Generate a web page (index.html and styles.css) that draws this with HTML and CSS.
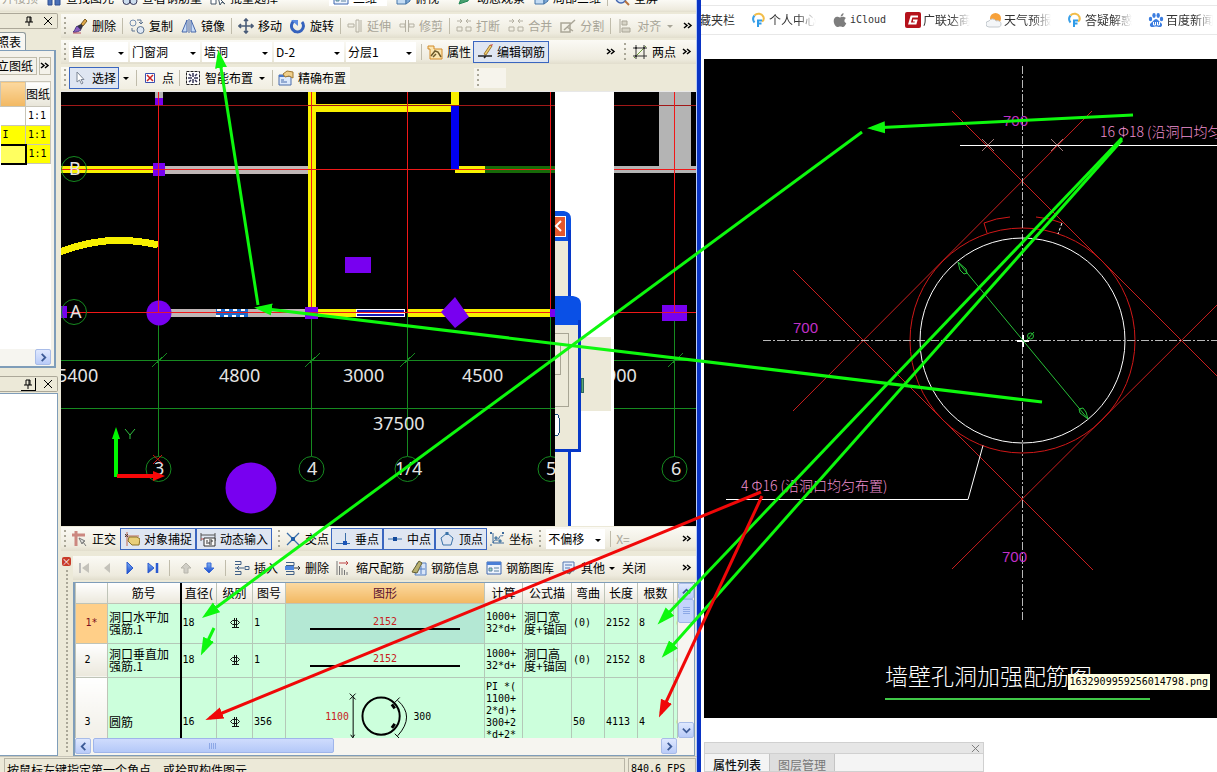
FILE: index.html
```html
<!DOCTYPE html>
<html lang="zh-CN">
<head>
<meta charset="utf-8">
<title>墙洞 - 编辑钢筋</title>
<link rel="stylesheet" href="styles.css">
</head>
<body>
<svg class="defs" aria-hidden="true">
  <defs>
    <linearGradient id="gb" x1="0" y1="0" x2="0" y2="1"><stop offset="0" stop-color="#7fb2f5"/><stop offset="1" stop-color="#1746c8"/></linearGradient>
    <symbol id="i-brush" viewBox="0 0 16 16"><path d="M9 6l4-5 2 2-4 5z" fill="#e0a84a" stroke="#7a5a20"/><path d="M5 8l4-2 2 2-2 4z" fill="#334"/><path d="M1 14c2-1 2-4 4-6l4 4c-2 1-5 3-8 2z" fill="#8b5fc0" stroke="#4a3a80"/><path d="M1 15h8" stroke="#b84a5a"/></symbol>
    <symbol id="i-copy" viewBox="0 0 16 16"><circle cx="4" cy="5" r="3" fill="none" stroke="#7890b0"/><circle cx="11.500" cy="12" r="3.500" fill="#dfe8f4" stroke="#5d7390"/><path d="M8 2h4v4M12 6l-2-2M12 6l2-2M3 10v3h3" fill="none" stroke="#5d7390"/></symbol>
    <symbol id="i-mirror" viewBox="0 0 16 16"><path d="M6 2v12H1zM10 2v12h5z" fill="#c8dcf8" stroke="#4666a8"/><path d="M8 1v14" stroke="#4666a8"/></symbol>
    <symbol id="i-move" viewBox="0 0 16 16"><path d="M8 1v14M1 8h14M6 3l2-2 2 2M6 13l2 2 2-2M3 6L1 8l2 2M13 6l2 2-2 2" fill="none" stroke="#4a5c78" stroke-width="1.600"/></symbol>
    <symbol id="i-rotate" viewBox="0 0 16 16"><path d="M4 3a6 6 0 1 0 8 1" fill="none" stroke="#3562bd" stroke-width="3"/><path d="M1 2h7v6z" fill="#5b8be0"/></symbol>
    <symbol id="i-extend" viewBox="0 0 16 16"><path d="M1 6h6v3H1zM9 2h3v12H9zM14 2v12" fill="none" stroke="#b4b0a2"/></symbol>
    <symbol id="i-trim" viewBox="0 0 16 16"><path d="M1 6h5v3H1zM10 6h5v3h-5zM6.500 2v12M9.500 2v12" fill="none" stroke="#b4b0a2"/></symbol>
    <symbol id="i-break" viewBox="0 0 16 16"><path d="M1 3h5M10 3h5M4 1l2 2-2 2M12 1l-2 2 2 2M1 9h5v4H1zM10 9h5v4h-5z" fill="none" stroke="#b4b0a2"/></symbol>
    <symbol id="i-split" viewBox="0 0 16 16"><path d="M1 5h9v9H1zM4 12L15 2M7 9l6 4" fill="none" stroke="#aaa698" stroke-width="1.500"/></symbol>
    <symbol id="i-align" viewBox="0 0 16 16"><path d="M3 1v14M5 3h5v4H5zM5 10h8v4H5z" fill="#d8d5c8" stroke="#aaa698"/></symbol>
    <symbol id="i-prop" viewBox="0 0 16 16"><path d="M1 2h6v3h8v10H3V5H1z" fill="#fbe6b0" stroke="#d28a28"/><path d="M4 12l4-5 3 1 3 5M6 13l3-3" fill="none" stroke="#6c5a2a" stroke-width="1.500"/></symbol>
    <symbol id="i-editbar" viewBox="0 0 16 16"><path d="M7 10L13 1l2 1-6 9z" fill="#f0d070" stroke="#a07830"/><path d="M13 1l2 1 1-2z" fill="#d04040"/><path d="M1 12h8l-2 2M1 12h14" fill="none" stroke="#222" stroke-width="1.500"/></symbol>
    <symbol id="i-twopt" viewBox="0 0 16 16"><path d="M4 1v14M12 1v14M1 4h14M1 12h14" stroke="#333"/><path d="M2 14L14 2" stroke="#6d9c3a"/><path d="M3 3h2v2H3zM11 3h2v2h-2zM3 11h2v2H3z" fill="#333"/></symbol>
    <symbol id="i-arrow" viewBox="0 0 16 16"><path d="M5 2v10l2.500-2 2 4 1.500-1-2-3.500h3z" fill="#fff" stroke="#7d8797"/></symbol>
    <symbol id="i-point" viewBox="0 0 16 16"><path d="M3.500 3.500h9v9h-9z" fill="#fff" stroke="#3a4fb0"/><path d="M5 5l6 6M11 5l-6 6" stroke="#c22" stroke-width="1.500"/></symbol>
    <symbol id="i-smart" viewBox="0 0 16 16"><path d="M1.500 1.500h13v13h-13z" fill="#fff" stroke="#222" stroke-dasharray="3 1"/><path d="M8 3v4M8 9v4M3 8h4M9 8h4M4 4l2 2M12 4l-2 2M4 12l2-2M12 12l-2-2" stroke="#335" stroke-width="1.500"/></symbol>
    <symbol id="i-exact" viewBox="0 0 16 16"><path d="M1 5h12v10H1z" fill="#dce9fb" stroke="#4a6cab"/><path d="M1 6h12" stroke="#4a78c8" stroke-width="2"/><path d="M3 10h3M3 12h6" stroke="#4a6cab"/><path d="M5 4l4-3 6 1v6l-4-2-4 1z" fill="#f0cf8a" stroke="#a07830"/></symbol>
    <symbol id="i-ortho" viewBox="0 0 16 16"><path d="M0 4h13M4 0v15" stroke="#cc8880" stroke-width="3"/><path d="M7 7l3 6 1-2 3 4M7 7l6 3-2 1" fill="#ddd" stroke="#777"/></symbol>
    <symbol id="i-snap" viewBox="0 0 16 16"><path d="M3 1v14M1 5h14" stroke="#c06a50"/><path d="M5 6h8l3 2-1 6H8L4 10z" fill="#e8cf7a" stroke="#8c7328"/><path d="M1 6l3-3M1 3l3 3" stroke="#444"/></symbol>
    <symbol id="i-dyn" viewBox="0 0 16 16"><path d="M1 2v8M15 2v8M1 4h14" fill="none" stroke="#555"/><path d="M1 8h3" stroke="#c55"/><path d="M4 7h11v8H4z" fill="#f8f8f8" stroke="#333"/><path d="M7 9v4M9 9h3v2H9v2h3" fill="none" stroke="#333"/></symbol>
    <symbol id="i-cross" viewBox="0 0 16 16"><path d="M2 2l12 12M14 2L2 14" stroke="#3a6ea8" stroke-width="1.300"/><path d="M6 6h4v4H6z" fill="#1f5fa8"/></symbol>
    <symbol id="i-perp" viewBox="0 0 16 16"><path d="M10.500 2v10M1 12.500h14" stroke="#3a6ea8"/><path d="M8 10h4v4H8z" fill="#1c55b8"/></symbol>
    <symbol id="i-mid" viewBox="0 0 16 16"><path d="M1 8h14" stroke="#3a6ea8"/><path d="M6 6h4v4H6z" fill="#134a9c"/></symbol>
    <symbol id="i-vert" viewBox="0 0 16 16"><path d="M8 2l6 5-2 7H4L2 7z" fill="none" stroke="#3a72a8"/><path d="M6.500 1h3v3h-3z" fill="#3a72a8"/></symbol>
    <symbol id="i-coord" viewBox="0 0 16 16"><path d="M4 2v10h11M4 12c2-6 4 0 6-5s3 0 4-3" fill="none" stroke="#3c6a9c"/><path d="M1 1l2 2M3 1L1 3M13 1l2 2M15 1l-2 2M1 14h2M6 6h2v2H6zM10 9h2v2h-2z" stroke="#3c6a9c" fill="#8cc"/></symbol>
    <symbol id="i-first" viewBox="0 0 16 16"><path d="M4 3v10" stroke="#bbb" stroke-width="2"/><path d="M13 3v10L6 8z" fill="#c4c2ba"/></symbol>
    <symbol id="i-prev" viewBox="0 0 16 16"><path d="M11 3v10L5 8z" fill="#c4c2ba"/></symbol>
    <symbol id="i-next" viewBox="0 0 16 16"><path d="M5 2v12l6-6z" fill="url(#gb)" stroke="#2a5ad0"/></symbol>
    <symbol id="i-last" viewBox="0 0 16 16"><path d="M3 3v10l6-5z" fill="url(#gb)" stroke="#2a5ad0"/><path d="M12 3v10" stroke="#2a5ad0" stroke-width="2.500"/></symbol>
    <symbol id="i-up" viewBox="0 0 16 16"><path d="M8 3l5 5h-3v5H6V8H3z" fill="#d0cec6" stroke="#b8b6ac"/></symbol>
    <symbol id="i-down" viewBox="0 0 16 16"><path d="M8 13l5-5h-3V3H6v5H3z" fill="url(#gb)" stroke="#3a6ad8"/></symbol>
    <symbol id="i-insert" viewBox="0 0 16 16"><path d="M1 1.500h6v3H1M1 11.500h6v3H1M1 8h9M5 6L3 8l2 2M11 6.500h4v3h-4z" fill="none" stroke="#3f5f86"/></symbol>
    <symbol id="i-remove" viewBox="0 0 16 16"><path d="M1 2.500h8v3H1M1 11.500h8v3H1" fill="none" stroke="#3f5f86"/><path d="M0 6h9v4H0z" fill="#4d86e0"/><path d="M9 8h6M13 6l2 2-2 2" fill="none" stroke="#333"/></symbol>
    <symbol id="i-scale" viewBox="0 0 16 16"><path d="M1 1v14M3.500 6v9M6 8v7M8.500 10v5M11 12v3" stroke="#777"/><path d="M3 3h9M10 1l2 2-2 2" stroke="#b44" fill="none"/></symbol>
    <symbol id="i-info" viewBox="0 0 16 16"><path d="M6 3h9v12H4z" fill="#d8e5f8" stroke="#567fc0"/><path d="M1 12L8 1l3 2-5 10z" fill="#b8b070" stroke="#655f30"/><path d="M8 9h6M10 6v8" stroke="#567fc0"/></symbol>
    <symbol id="i-lib" viewBox="0 0 16 16"><path d="M1 2h14v12H1z" fill="#eef4fd" stroke="#3f66ae"/><path d="M1 3.500h14" stroke="#4a7fd6" stroke-width="3"/><path d="M3 8h3v3H3zM8 8h5M8 11h5" stroke="#5a80a0" fill="#9db"/></symbol>
    <symbol id="i-other" viewBox="0 0 16 16"><path d="M2 2h11v9H2zM4 5h7M4 8h5" fill="#e4eefc" stroke="#5577b0"/><path d="M8 14l6-7M6 13h3" stroke="#666" stroke-width="1.500"/></symbol>
    <symbol id="i-find" viewBox="0 0 16 16"><path d="M2 3h4v12H2zM9 3h5v12H9z" fill="#4a70b8" stroke="#2f4f90"/><path d="M6 6h3" stroke="#2f4f90"/></symbol>
    <symbol id="i-glass" viewBox="0 0 16 16"><circle cx="4.500" cy="11" r="3.500" fill="#cde" stroke="#335"/><circle cx="11.500" cy="11" r="3.500" fill="#cde" stroke="#335"/></symbol>
    <symbol id="i-batch" viewBox="0 0 16 16"><path d="M1 3h5v4H1zM8 3h6v4H8zM1 9h5v5H1z" fill="#fff" stroke="#456"/><path d="M8 7l2 8 2-3 3 2z" fill="#fff" stroke="#456"/></symbol>
    <symbol id="i-cube" viewBox="0 0 16 16"><path d="M2 4h9v10H2z" fill="#c4dcf4" stroke="#4676a8"/><path d="M11 4l4-3v10l-4 3z" fill="#7ba6d4" stroke="#4676a8"/></symbol>
    <symbol id="i-orbit" viewBox="0 0 16 16"><path d="M2 14L5 6l9-4-3 9z" fill="#4aa070" stroke="#285"/></symbol>
    <symbol id="i-zoom" viewBox="0 0 16 16"><circle cx="7" cy="8" r="5" fill="#cfe2fa" stroke="#4466b0" stroke-width="1.500"/><path d="M11 11l4 4" stroke="#b8703a" stroke-width="2"/><path d="M5 8h4M7 6v4" stroke="#246"/></symbol>
    <symbol id="i-pin" viewBox="0 0 10 10"><path d="M3 1h4v5M3 1v5M1 6h8M5 6v4M6 1v5" stroke="#000" fill="none"/></symbol>
    <symbol id="i-x" viewBox="0 0 10 10"><path d="M1 1l8 8M9 1L1 9" stroke="#000"/></symbol>
    <symbol id="i-more" viewBox="0 0 10 10"><path d="M1 2l3 2.500L1 7M5 2l3 2.500L5 7" fill="none" stroke="#000" stroke-width="1.500"/></symbol>
    <symbol id="i-ans" viewBox="0 0 16 16"><path d="M3.500 10.500a5.500 5.500 0 0 1 0-7" fill="none" stroke="#3aa0e8" stroke-width="2"/><path d="M3.500 3.500a5.500 5.500 0 0 1 9 1.500c.7 2 0 3.500-1.500 4.500" fill="none" stroke="#f2bd48" stroke-width="2"/><path d="M11 8.500H7V15M7 11.500h3.500" fill="none" stroke="#2f9be8" stroke-width="2"/></symbol>
    <symbol id="i-apple" viewBox="0 0 16 16"><path d="M8.500 4.500C9 2.500 10 1.500 11.500 1c.2 2-1 3.500-3 3.500zM8 5.500c1-.2 2-.9 3.300-.7 1 .1 2 .6 2.500 1.400-2 1.300-1.700 4.200.5 5-.7 1.800-2 3.800-3.300 3.800-1 0-1.400-.6-2.700-.6S6.500 15 5.500 15C3.500 15 1.700 11.500 1.700 9s1.500-4.200 3.300-4.200c1.200 0 2 .7 3 .7z" fill="#7d7d7d"/></symbol>
    <symbol id="i-g" viewBox="0 0 16 16"><rect width="16" height="16" rx="2" fill="#b5121b"/><path d="M13 4.500H6.500L4.500 11.500h6l.8-3H8" fill="none" stroke="#fff" stroke-width="2.200"/></symbol>
    <symbol id="i-sun" viewBox="0 0 16 16"><circle cx="9.500" cy="6.500" r="5.500" fill="#f7a13a"/><path d="M3 15a3 3 0 0 1 0-6 4 4 0 0 1 7 0c3-1 5 1 5 3s-1 3-3 3z" fill="#f4f6f8" stroke="#c4c9ce"/></symbol>
    <symbol id="i-paw" viewBox="0 0 16 16"><g fill="#3b7de0"><ellipse cx="2.500" cy="7" rx="1.700" ry="2.200"/><ellipse cx="6" cy="3.500" rx="1.700" ry="2.400"/><ellipse cx="10.200" cy="3.500" rx="1.700" ry="2.400"/><ellipse cx="13.500" cy="7" rx="1.700" ry="2.200"/><path d="M8 7c2 0 3 2.500 5 4s1 4-1 4-2.500-.5-4-.5-2 .5-4 .5-3-2.500-1-4S6 7 8 7z"/></g><path d="M5.500 10v3h2v-3M9.500 10v3h2v-3" fill="none" stroke="#fff"/></symbol>
    <symbol id="i-grade" viewBox="0 0 12 12"><path d="M3.500 3.500h5l2 2-2 2h-5l-2-2zM5.500 1v9M7.500 1v9M3 10.500h7" fill="none" stroke="#111"/></symbol>
    <symbol id="i-chl" viewBox="0 0 10 10"><path d="M7 1L3 5l4 4" fill="none" stroke="#3c5a96" stroke-width="2"/></symbol>
    <symbol id="i-chr" viewBox="0 0 10 10"><path d="M3 1l4 4-4 4" fill="none" stroke="#3c5a96" stroke-width="2"/></symbol>
    <symbol id="i-chu" viewBox="0 0 10 10"><path d="M1 7l4-4 4 4" fill="none" stroke="#3c5a96" stroke-width="2"/></symbol>
    <symbol id="i-chd" viewBox="0 0 10 10"><path d="M1 3l4 4 4-4" fill="none" stroke="#3c5a96" stroke-width="2"/></symbol>
  </defs>
</svg>

<div class="desktop">
  <section class="app">
    <div class="bar topbar">
      <button class="tool off">并楼顶</button>
      <button class="tool"><svg class="ic"><use href="#i-find"/></svg>查找图元</button>
      <button class="tool"><svg class="ic"><use href="#i-glass"/></svg>查看钢筋量</button>
      <button class="tool"><svg class="ic"><use href="#i-batch"/></svg>批量选择</button>
      <button class="tool viewmode"><svg class="ic"><use href="#i-lib"/></svg>二维</button>
      <button class="tool"><svg class="ic"><use href="#i-cube"/></svg>俯视<i class="caret"></i></button>
      <button class="tool"><svg class="ic"><use href="#i-orbit"/></svg>动态观察</button>
      <button class="tool"><svg class="ic"><use href="#i-cube"/></svg>局部三维</button>
      <i class="sep"></i>
      <button class="tool"><svg class="ic"><use href="#i-zoom"/></svg>全屏</button>
    </div>

    <div class="body">
      <aside class="side">
        <div class="panel-head"><button class="mini" aria-label="固定"><svg><use href="#i-pin"/></svg></button><button class="mini" aria-label="关闭"><svg><use href="#i-x"/></svg></button></div>
        <div class="tabs"><button class="tab">照表</button></div>
        <div class="sheet-box">
          <div class="sheet-tools"><button class="flat">立图纸</button><button class="flat" aria-label="更多"><svg><use href="#i-more"/></svg></button></div>
          <div class="sheet-list">
            <table class="sheet">
              <thead><tr><th class="hot"></th><th>图纸</th></tr></thead>
              <tbody>
                <tr><td></td><td>1:1</td></tr>
                <tr class="yel"><td>I</td><td>1:1</td></tr>
                <tr class="yel"><td class="cur"></td><td>1:1</td></tr>
              </tbody>
            </table>
          </div>
          <div class="hscroll"><button class="sb" aria-label="右"><svg><use href="#i-chr"/></svg></button></div>
        </div>
        <div class="panel-head second"><button class="mini raised" aria-label="固定"><svg><use href="#i-pin"/></svg></button><button class="mini" aria-label="关闭"><svg><use href="#i-x"/></svg></button></div>
        <div class="blank"></div>
      </aside>

      <main class="main">
        <div class="bar">
          <i class="grip"></i>
          <button class="tool"><svg class="ic"><use href="#i-brush"/></svg>删除</button><i class="sep"></i>
          <button class="tool"><svg class="ic"><use href="#i-copy"/></svg>复制</button>
          <button class="tool"><svg class="ic"><use href="#i-mirror"/></svg>镜像</button><i class="sep"></i>
          <button class="tool"><svg class="ic"><use href="#i-move"/></svg>移动</button>
          <button class="tool"><svg class="ic"><use href="#i-rotate"/></svg>旋转</button><i class="sep"></i>
          <button class="tool off"><svg class="ic"><use href="#i-extend"/></svg>延伸</button>
          <button class="tool off"><svg class="ic"><use href="#i-trim"/></svg>修剪</button><i class="sep"></i>
          <button class="tool off"><svg class="ic"><use href="#i-break"/></svg>打断</button>
          <button class="tool off"><svg class="ic"><use href="#i-break"/></svg>合并</button>
          <button class="tool off"><svg class="ic"><use href="#i-split"/></svg>分割</button><i class="sep"></i>
          <button class="tool off"><svg class="ic"><use href="#i-align"/></svg>对齐<i class="caret"></i></button>
          <button class="more" aria-label="更多"><svg><use href="#i-more"/></svg></button>
        </div>
        <div class="bar tight">
          <i class="grip"></i>
          <span class="combo first"><select aria-label="楼层"><option>首层</option></select></span>
          <span class="combo"><select aria-label="构件类型"><option>门窗洞</option></select></span>
          <span class="combo"><select aria-label="构件"><option>墙洞</option></select></span>
          <span class="combo"><select aria-label="名称"><option>D-2</option></select></span>
          <span class="combo"><select aria-label="分层"><option>分层1</option></select></span>
          <i class="sep wide"></i>
          <button class="tool"><svg class="ic"><use href="#i-prop"/></svg>属性</button>
          <button class="tool on"><svg class="ic"><use href="#i-editbar"/></svg>编辑钢筋</button>
          <button class="more" aria-label="更多"><svg><use href="#i-more"/></svg></button>
          <div class="dock"><i class="grip"></i><button class="tool"><svg class="ic"><use href="#i-twopt"/></svg>两点</button><button class="more" aria-label="更多"><svg><use href="#i-more"/></svg></button></div>
        </div>
        <div class="bar tight third">
          <div class="strip">
            <i class="grip"></i>
            <button class="tool on"><svg class="ic"><use href="#i-arrow"/></svg>选择</button><i class="caret"></i>
            <i class="sep wide"></i>
            <button class="tool"><svg class="ic"><use href="#i-point"/></svg>点</button>
            <i class="sep wide"></i>
            <button class="tool"><svg class="ic"><use href="#i-smart"/></svg>智能布置<i class="caret"></i></button>
            <i class="sep wide"></i>
            <button class="tool"><svg class="ic"><use href="#i-exact"/></svg>精确布置</button>
          </div>
          <div class="stub"><i class="grip"></i></div>
        </div>

        <div class="plan">
          <svg viewBox="61 91 635 435" preserveAspectRatio="none" shape-rendering="crispEdges">
            <path fill="#000" d="M61 92h494v434H61zM614 92h82v434h-82z"/>
            <path fill="#b4b4b4" d="M155 92h8v6h-8zM659 92h32v74h-32zM614 166h82v7h-82z"/>
            <path fill="#bfb6b6" d="M165 166h143v8H165zM171 309h134v8H171z"/>
            <path fill="#f8f000" d="M308 92h8v217h-8zM312 104h143v8H312zM451 92h8v13h-8zM455 166h30v7h-30zM61 166h92v7H61zM318 309h38v8h-38zM407 309h143v8H407z"/>
            <path fill="#0000f0" d="M451 105h8v64h-8z"/><path fill="#176a08" d="M485 166h70v7h-70z"/>
            <path fill="none" stroke="#f8f000" stroke-width="7" d="M60 252Q108 233 158 245"/>
            <path fill="#fff" d="M356 309h49v8h-49z"/><path fill="#1818b8" d="M357 310h47v2h-47zM357 314h47v2h-47z"/>
            <path fill="#1c68c8" d="M216 309h32v8h-32z"/><path stroke="#fff" stroke-width="2" stroke-dasharray="4 4" d="M217 310h30M216 316h32"/>
            <path fill="#a01818" d="M61 105h494v1H61zM614 105h82v1h-82z"/>
            <path fill="#f01818" d="M61 169h494v1H61zM614 169h82v1h-82zM61 312h494v1H61zM614 312h82v1h-82zM158 92h1v221h-1zM311 92h1v221h-1zM407 92h1v221h-1zM550 92h1v221h-1zM674 92h1v221h-1z"/>
            <path fill="#168a20" d="M158 313h1v143h-1zM311 313h1v143h-1zM407 313h1v143h-1zM550 313h1v143h-1zM674 313h1v143h-1zM61 360h494v1H61zM614 360h82v1h-82zM61 408h494v1H61zM614 408h82v1h-82z"/>
            <path stroke="#168a20" fill="none" d="M152 367l15-14M305 367l15-14M400 367l15-14M544 367l11-10M668 367l15-14"/>
            <g fill="#7800f0" shape-rendering="auto"><path d="M155 98h8v7h-8zM153 163h12v13h-12zM61 306h6v12h-6zM305 307h13v12h-13zM345 257h26v16h-26zM455 297l14 20-14 11-14-16zM550 309h5v8h-5zM662 305h25v16h-25z"/><circle cx="159" cy="313" r="12.500"/><circle cx="251" cy="488" r="25.500"/></g>
            <path fill="#e01838" d="M158 301h1v12h-1zM158 98h1v7h-1zM158 163h1v13h-1zM146 312h26v1h-26zM305 312h13v1h-13zM153 169h12v1h-12zM662 312h25v1h-25zM674 305h1v8h-1z"/>
            <g fill="none" stroke="#168a20" shape-rendering="auto"><circle cx="74" cy="169" r="12.500"/><circle cx="74" cy="312" r="12.500"/><circle cx="158.500" cy="469" r="12.500"/><circle cx="311.500" cy="469" r="12.500"/><circle cx="407.500" cy="469" r="12.500"/><circle cx="550.500" cy="469" r="12.500"/><circle cx="674.500" cy="469" r="12.500"/></g>
            <g class="dim"><text x="69" y="175">B</text><text x="70" y="318">A</text><text x="57" y="382">5400</text><text x="219" y="382">4800</text><text x="343" y="382">3000</text><text x="462" y="382">4500</text><text x="373" y="430">37500</text><text x="154" y="475">3</text><text x="307" y="475">4</text><text x="395" y="475">1/4</text><text x="546" y="475">5</text><text x="606" y="382">900</text><text x="671" y="475">6</text></g>
            <path fill="#e8e8e8" d="M61 91h635v1H61z"/>
            <g shape-rendering="auto"><path fill="none" stroke="#00f800" stroke-width="4" d="M116 477v-40"/><path fill="#00f800" d="M112 439l4-12 4 12z"/><path stroke="#f80808" stroke-width="4" d="M117 476h38"/><path fill="#f80808" d="M153 471l12 5-12 5z"/><path stroke="#30c040" fill="none" d="M125 429l5 6 5-6M130 435v4"/><path stroke="#d01010" d="M153 455l10 9M162 455l-9 9"/></g>
            <path fill="#fff" d="M555 92h59v434h-59z"/>
            <path fill="#ece9d8" d="M555 230h14v296h-14zM581 337h30v74h-30z"/>
            <path fill="#0b50e0" d="M555 211h9q7 1 7 8v22h-16z" shape-rendering="auto"/><path fill="#0638c8" d="M568 230h3v296h-3z"/>
            <path fill="#fff" d="M555 216h10l1 1v19l-1 1h-10z"/><path fill="#e4572c" d="M555 217h10v19h-10z"/><path fill="none" stroke="#fff" stroke-width="2" d="M561 221l-5 5 5 5" shape-rendering="auto"/>
            <path fill="#ece9d8" d="M555 320h23v130h-23z"/><path fill="#0a50e6" d="M555 296h18q8 1 8 8v21h-26z" shape-rendering="auto"/><path fill="#0638c8" d="M578 320h3v132h-26v-3h23z"/>
            <path fill="none" stroke="#a8a594" d="M555 333.500h13.500v73H555M560.500 345v29.500H555"/><path fill="#fff" stroke="#184878" d="M555 414.500h2q2 0 2 3v15q0 3-2 3h-2"/><path fill="#5ba874" stroke="#31665e" d="M581 378h2v14h-2z"/>
          </svg>
        </div>

        <div class="bar tight snap">
          <i class="grip"></i>
          <button class="tool lead"><svg class="ic"><use href="#i-ortho"/></svg>正交</button>
          <div class="joined"><button class="tool on"><svg class="ic"><use href="#i-snap"/></svg>对象捕捉</button><button class="tool on"><svg class="ic"><use href="#i-dyn"/></svg>动态输入</button></div>
          <i class="grip apart"></i>
          <button class="tool"><svg class="ic"><use href="#i-cross"/></svg>交点</button>
          <div class="joined"><button class="tool on"><svg class="ic"><use href="#i-perp"/></svg>垂点</button><button class="tool on"><svg class="ic"><use href="#i-mid"/></svg>中点</button><button class="tool on"><svg class="ic"><use href="#i-vert"/></svg>顶点</button></div>
          <button class="tool"><svg class="ic"><use href="#i-coord"/></svg>坐标</button>
          <i class="grip apart"></i>
          <span class="combo first"><select aria-label="偏移"><option>不偏移</option></select></span>
          <i class="sep wide"></i><label class="off">X=</label>
          <button class="more" aria-label="更多"><svg><use href="#i-more"/></svg></button>
        </div>

        <div class="rebar">
          <div class="handle"><button class="close" aria-label="关闭">×</button><i class="dots"></i></div>
          <div class="rebar-body">
            <div class="bar nav">
              <button class="tool" aria-label="首条"><svg class="ic"><use href="#i-first"/></svg></button>
              <button class="tool" aria-label="上一条"><svg class="ic"><use href="#i-prev"/></svg></button>
              <button class="tool" aria-label="下一条"><svg class="ic"><use href="#i-next"/></svg></button>
              <button class="tool" aria-label="末条"><svg class="ic"><use href="#i-last"/></svg></button><i class="sep"></i>
              <button class="tool" aria-label="上移"><svg class="ic"><use href="#i-up"/></svg></button>
              <button class="tool" aria-label="下移"><svg class="ic"><use href="#i-down"/></svg></button><i class="sep"></i>
              <button class="tool"><svg class="ic"><use href="#i-insert"/></svg>插入</button>
              <button class="tool"><svg class="ic"><use href="#i-remove"/></svg>删除</button>
              <button class="tool"><svg class="ic"><use href="#i-scale"/></svg>缩尺配筋</button>
              <button class="tool"><svg class="ic"><use href="#i-info"/></svg>钢筋信息</button>
              <button class="tool"><svg class="ic"><use href="#i-lib"/></svg>钢筋图库</button>
              <button class="tool"><svg class="ic"><use href="#i-other"/></svg>其他<i class="caret"></i></button>
              <button class="tool">关闭</button>
              <button class="more" aria-label="更多"><svg><use href="#i-more"/></svg></button>
            </div>
            <div class="gridbox">
              <div class="gridrow">
                <div class="gridclip">
                  <table class="grid">
                    <colgroup><col class="c-idx"><col class="c-name"><col class="c-s"><col class="c-s"><col class="c-xs"><col><col class="c-calc"><col class="c-desc"><col class="c-xs"><col class="c-xs"><col class="c-s"><col class="c-end"></colgroup>
                    <thead><tr><th></th><th>筋号</th><th class="dia">直径(</th><th>级别</th><th>图号</th><th class="hot">图形</th><th>计算</th><th>公式描</th><th>弯曲</th><th>长度</th><th>根数</th><th></th></tr></thead>
                    <tbody>
                      <tr class="r1"><th class="cur">1*</th><td>洞口水平加强筋.1</td><td class="dia num">18</td><td class="mid"><svg class="grade"><use href="#i-grade"/></svg></td><td class="num">1</td><td class="shape sel"><span>2152</span></td><td class="num">1000+<br>32*d+</td><td>洞口宽度+锚固</td><td class="num">(0)</td><td class="num">2152</td><td class="num">8</td><td class="num">(</td></tr>
                      <tr class="r2"><th>2</th><td>洞口垂直加强筋.1</td><td class="dia num">18</td><td class="mid"><svg class="grade"><use href="#i-grade"/></svg></td><td class="num">1</td><td class="shape"><span>2152</span></td><td class="num">1000+<br>32*d+</td><td>洞口高度+锚固</td><td class="num">(0)</td><td class="num">2152</td><td class="num">8</td><td class="num">(</td></tr>
                      <tr class="r3"><th>3</th><td>圆筋</td><td class="dia num">16</td><td class="mid"><svg class="grade"><use href="#i-grade"/></svg></td><td class="num">356</td><td class="ring"><svg viewBox="0 0 200 80"><circle cx="96" cy="34" r="19" fill="none" stroke="#000" stroke-width="2"/><path d="M67.500 14v42M64 11l6 6M70 11l-6 6M65 53l2 3 2-3M113 18q18 16 0 36M110 20l5-5M110 52l5 5" fill="none" stroke="#000"/><path d="M107 22l3 4M107 46l3-4" stroke="#000" stroke-width="3"/><text x="39" y="38" fill="#c82020">1100</text><text x="129" y="38">300</text></svg></td><td class="num top">PI *(<br>1100+<br>2*d)+<br>300+2<br>*d+2*</td><td></td><td class="num">50</td><td class="num">4113</td><td class="num">4</td><td class="num">(</td></tr>
                    </tbody>
                  </table>
                </div>
                <div class="vscroll"><button class="sb" aria-label="上"><svg><use href="#i-chu"/></svg></button><i class="vthumb"></i><button class="sb down" aria-label="下"><svg><use href="#i-chd"/></svg></button></div>
              </div>
              <div class="hscroll wide"><button class="sb" aria-label="左"><svg><use href="#i-chl"/></svg></button><i class="hthumb"></i><button class="sb last" aria-label="右"><svg><use href="#i-chr"/></svg></button></div>
            </div>
          </div>
        </div>
      </main>
    </div>
    <footer class="status"><span class="msg">按鼠标左键指定第一个角点，或拾取构件图元</span><span class="fps">840.6 FPS</span></footer>
  </section>

  <section class="browser">
    <nav class="marks">
      <a href="#" class="cut">藏夹栏</a>
      <a href="#"><svg class="ic"><use href="#i-ans"/></svg><span>个人中心</span></a>
      <a href="#" class="plain"><svg class="ic"><use href="#i-apple"/></svg><span>iCloud</span></a>
      <a href="#"><svg class="ic"><use href="#i-g"/></svg><span>广联达商</span></a>
      <a href="#"><svg class="ic"><use href="#i-sun"/></svg><span>天气预报</span></a>
      <a href="#"><svg class="ic"><use href="#i-ans"/></svg><span>答疑解惑</span></a>
      <a href="#"><svg class="ic"><use href="#i-paw"/></svg><span>百度新闻</span></a>
    </nav>
    <figure class="cad">
      <svg viewBox="704 59 513 659" preserveAspectRatio="none">
        <g fill="none" stroke="#c81e1e"><path d="M952 111L1217 376"/><path d="M1092 111L793 411"/><path d="M793 270L1093 570"/><path d="M1217 305L952 569"/><circle cx="1022.500" cy="340.500" r="112.500" stroke="#d01818"/><path stroke="#d01818" d="M987 233l-3-10q12-5 26-6M1036 217q14 1 26 6"/></g>
        <g fill="none" stroke="#b8b8b8" stroke-dasharray="8 2 2 2"><path d="M1022.500 66v554M763 340.500h454"/></g>
        <circle cx="1022.500" cy="340.500" r="102.500" fill="none" stroke="#fff"/>
        <path d="M960 145.500h257M726 499.500h242l15-54" stroke="#fff" fill="none"/>
        <path d="M1017 341h12M1023 335v12" stroke="#fff" stroke-width="2"/>
        <path d="M1062 223l-4 11" stroke="#fff" stroke-dasharray="3 2"/>
        <path d="M982 151l12-12M1063 151l-12-12M982 139l12 12M1051 151l12-12" stroke="#e8b0b0" fill="none" stroke-width=".7"/>
        <g stroke="#28c038" fill="none"><path d="M958 262l130 157M958 262l2 8 4 4 3-1-1-4zM1088 419l-2-7-3-4-4 1 1 4z"/><ellipse cx="1030.500" cy="336" rx="3" ry="3"/><path d="M1027 340l7-8"/></g>
        <path fill="#40c848" d="M885 698h265v2H885z"/>
        <g class="mag"><text x="1003" y="126">700</text><text x="793" y="333">700</text><text x="1002" y="562">700</text></g>
        <text class="pink" x="1100" y="137">16 Φ18 (沿洞口均匀布置)</text>
        <text class="pink" x="741" y="491">4 Φ16 (沿洞口均匀布置)</text>
        <text class="ttl" x="885" y="685">墙壁孔洞加强配筋图</text>
      </svg>
      <span class="tip">1632909959256014798.png</span>
    </figure>
    <div class="props">
      <div class="props-head"><button aria-label="关闭"><svg><use href="#i-x"/></svg></button></div>
      <div class="props-tabs"><button class="sel">属性列表</button><button>图层管理</button></div>
    </div>
  </section>

  <svg class="links" viewBox="0 0 1217 772" preserveAspectRatio="none" aria-hidden="true">
    <defs>
      <marker id="mg" markerUnits="userSpaceOnUse" markerWidth="18" markerHeight="14" refX="13" refY="7" orient="auto"><path d="M0 1l18 6-18 6z" fill="#0df80d"/></marker>
      <marker id="mr" markerUnits="userSpaceOnUse" markerWidth="18" markerHeight="14" refX="13" refY="7" orient="auto"><path d="M0 1l18 6-18 6z" fill="#f00808"/></marker>
    </defs>
    <g stroke="#0df80d" stroke-width="3" marker-end="url(#mg)">
      <path d="M258 305L219 55"/><path d="M1042 402L259 308"/><path d="M1133 115L872 128"/><path d="M862 132L206 615"/><path d="M214 628L203 651"/><path d="M1122 138L661 621"/><path d="M1122 140L665 654"/>
    </g>
    <g stroke="#f00808" stroke-width="3" marker-end="url(#mr)"><path d="M761 492L210 718"/><path d="M762 496L661 713"/></g>
  </svg>
</div>
</body>
</html>
```
FILE: styles.css
```css
* { box-sizing: border-box; }
body { margin: 0; overflow: hidden; font: 12px/16px "Noto Sans CJK SC", sans-serif; color: #000; background: #fff; }
button, select { font: inherit; color: inherit; margin: 0; padding: 0; border: 0; background: none; border-radius: 0; }
button { display: flex; align-items: center; white-space: nowrap; }
i { font-style: normal; display: block; flex: none; }
.defs { position: absolute; width: 0; height: 0; }

.desktop { position: relative; display: grid; grid-template-columns: minmax(0, 701fr) minmax(0, 516fr); height: 100vh; overflow: hidden; }
.links { position: absolute; inset: 0; width: 100%; height: 100%; pointer-events: none; fill: none; }

/* application window */
.app { display: flex; flex-direction: column; min-height: 0; background: #ece9d8; border-right: 4px solid #0a34c4; box-shadow: inset -1px 0 #b8ccf8; }
.body { display: flex; flex: 1; min-height: 0; margin-right: 1px; }
.main { display: flex; flex-direction: column; flex: 1; min-width: 0; }

/* toolbars */
.bar { display: flex; align-items: center; gap: 8px; flex: none; height: 24px; margin: 1px 0; padding: 0 4px 0 3px; background: linear-gradient(#fbfaf5, #eeebde 80%, #e2decd); overflow: hidden; }
.bar.tight { gap: 2px; }
.tool { gap: 4px; flex: none; height: 22px; }
.tool.on { padding: 0 3px; border: 1px solid #3a66c0; background: #dfe6f2; }
.off { color: #a8a598; }
.ic { width: 16px; height: 16px; flex: none; }
.sep { width: 1px; height: 16px; margin: 0 -2px; background: #c0bcab; }
.sep.wide { margin: 0 3px; }
.grip { width: 3px; height: 18px; margin-right: -3px; background: radial-gradient(circle at 1px 1px, #aaa798 1px, transparent 1px) 0 0 / 3px 5px; }
.tight .grip { margin-right: 0; }
.tight .grip.apart { margin: 0 2px 0 4px; }
.lead { margin: 0 2px 0 3px; }
.caret { width: 0; height: 0; margin: 0 2px; border: 3px solid transparent; border-top-color: currentColor; border-bottom: 0; }
.more { margin-left: auto; }
.more svg { width: 10px; height: 16px; }
.combo { position: relative; display: flex; width: 70px; height: 20px; background: #fff; }
.combo.first { width: 59px; }
.combo select { appearance: none; flex: 1; min-width: 0; padding: 0 2px; }
.combo::after { content: ""; position: absolute; right: 4px; top: 10px; border: 3px solid transparent; border-top-color: #000; border-bottom: 0; pointer-events: none; }
.dock { display: flex; align-items: center; gap: 5px; width: 74px; height: 24px; padding-left: 6px; }
.bar.third { background: none; padding-left: 0; }
.strip { display: flex; align-items: center; gap: 2px; height: 22px; padding: 0 4px 0 3px; background: linear-gradient(#faf9f4, #f1eee2); }
.strip .on { padding: 0 2px; }
.stub { display: flex; align-items: center; width: 32px; height: 20px; margin-left: 122px; padding-left: 3px; background: #f6f4ec; }
.joined { display: flex; }
.bar.topbar { height: 12px; gap: 8px; align-items: flex-end; padding: 0 0 6px 2px; margin: 0 1px 1px 0; overflow: hidden; }
.topbar .tool { height: 16px; }
.topbar .sep { height: 6px; }
.topbar .caret { margin: 0; }
.viewmode { width: 58px; margin-left: 43px; padding-left: 4px; background: #fff; }

/* left panels */
.side { display: flex; flex-direction: column; width: 61px; flex: none; padding-right: 3px; }
.panel-head { display: flex; justify-content: flex-end; align-items: center; gap: 4px; height: 16px; flex: none; padding-right: 2px; border: 1px solid #aca899; border-left: 0; border-radius: 0 2px 2px 0; }
.panel-head.second { margin-top: 8px; }
.mini { width: 15px; height: 13px; justify-content: center; }
.mini svg, .flat svg { width: 10px; height: 10px; }
.mini.raised { border-right: 1px solid #000; border-bottom: 1px solid #000; }
.tabs { display: flex; height: 21px; padding-top: 3px; }
.tab { width: 26px; height: 18px; background: #f8f7f2; border-right: 1px solid #919b9c; border-top: 1px solid #919b9c; justify-content: flex-end; padding-right: 4px; overflow: hidden; border-radius: 0 3px 0 0; }
.sheet-box { display: flex; flex-direction: column; height: 318px; margin-right: 2px; padding-right: 3px; border: 1px solid #7f9db9; border-left: 0; border-width: 1px 2px 2px 0; background: #f4f2ea; }
.sheet-tools { display: flex; justify-content: space-between; align-items: center; height: 30px; }
.flat { height: 18px; overflow: hidden; border: 1px solid #c0bcab; justify-content: flex-end; }
.flat:first-child { width: 37px; padding-right: 3px; border-left: 0; }
.sheet-list { flex: 1; background: #fff; }
.sheet { width: 100%; table-layout: fixed; border-collapse: collapse; font: 10px/12px "DejaVu Sans Mono", monospace; }
.sheet th { height: 25px; padding: 0; font: 12px/16px "Noto Sans CJK SC", sans-serif; overflow: hidden; white-space: nowrap; background: linear-gradient(#fff, #e8e5d8); border: 1px solid #c8c5b8; }
.sheet th.hot, .grid th.hot { background: linear-gradient(#fcd9a0, #f2b862); color: #5a1030; }
.sheet td { height: 19px; padding: 0 2px; border: 1px solid #c8c5b8; border-left: 0; }
.yel td { background: #ff0; }
.yel td.cur { background: #ffff60; border: 2px solid #000; border-left: 0; }
.blank { flex: 1; margin-top: 1px; background: #fff; border: 1px solid #7f9db9; border-left: 0; }

/* scrollbars */
.sb { width: 16px; height: 16px; flex: none; justify-content: center; background: linear-gradient(#dfe8fe, #b9cbf8); border: 1px solid #a8bce8; border-radius: 2px; }
.sb svg { width: 9px; height: 9px; }
.hscroll { display: flex; justify-content: flex-end; height: 17px; flex: none; background: #f6f5f0; }
.hscroll.wide { justify-content: flex-start; gap: 2px; padding-right: 17px; }
.hthumb { width: 40%; height: 15px; border-radius: 2px; border: 1px solid #9fb5ea; background: repeating-linear-gradient(90deg, #8da8e6 0 1px, transparent 1px 2px) center / 8px 6px no-repeat, linear-gradient(#cfdcfd, #b4c8f8); }
.sb.last { margin-left: auto; }
.vscroll { display: flex; flex-direction: column; width: 16px; flex: none; background: #f6f5f0; }
.vthumb { width: 16px; height: 24px; border-radius: 2px; border: 1px solid #9fb5ea; background: repeating-linear-gradient(#8da8e6 0 1px, transparent 1px 2px) center / 7px 8px no-repeat, #c4d4fc; }
.sb.down { margin-top: auto; }

/* floor plan */
.plan { flex: 1; min-height: 0; }
.plan svg, .cad svg { display: block; width: 100%; height: 100%; }
.dim { font: 18px "Noto Sans", sans-serif; fill: #e4e4e4; }

/* rebar editor */
.rebar { display: flex; flex: none; height: 204px; }
.snap { margin: 1px 0; }
.handle { width: 12px; padding-top: 5px; }
.close { width: 9px; height: 9px; margin-left: 1px; justify-content: center; color: #fff; background: #c83a28; border-radius: 2px; font-size: 9px; line-height: 9px; }
.dots { width: 2px; height: 184px; margin: 4px 0 0 5px; background: repeating-linear-gradient(#aaa798 0 2px, transparent 2px 4px); }
.rebar-body { display: flex; flex-direction: column; flex: 1; min-width: 0; }
.nav { gap: 7px; margin: 4px 0 2px; }
.nav .sep { margin: 0 1px; }
.nav .caret { margin: 0; }
.gridbox { display: flex; flex-direction: column; flex: 1; min-height: 0; border: 1px solid #7f9db9; border-left-width: 2px; margin-right: 1px; background: #fff; }
.gridrow { display: flex; flex: 1; min-height: 0; }
.gridclip { flex: 1; min-width: 0; overflow: hidden; }
.grid { width: 100%; table-layout: fixed; border-collapse: collapse; line-height: 12px; background: #ccffdc; }
.c-idx { width: 32px; } .c-name { width: 73px; } .c-s { width: 36px; } .c-xs { width: 33px; } .c-calc { width: 38px; } .c-desc { width: 49px; } .c-end { width: 4px; }
.grid th { height: 20px; padding: 0; font-weight: normal; white-space: nowrap; overflow: hidden; background: linear-gradient(#fff, #ebe8dc); border: 1px solid #bfc4b8; border-top: 0; }
.grid td { padding: 0 1px; border: 1px solid #b4c8b8; overflow: hidden; }
.grid .dia { border-left: 2px solid #000; }
.grid tbody th { font: 10px/12px "DejaVu Sans Mono", monospace; padding-right: 8px; }
.grid tbody th.cur { background: #ffcf88; color: #7a1020; padding: 0; }
.grid .num { font: 10px/12px "DejaVu Sans Mono", monospace; }
.grid .top { vertical-align: top; padding-top: 3px; }
.mid { text-align: center; }
.grade { width: 12px; height: 12px; display: inline-block; }
.r1 { height: 40px; } .r2 { height: 34px; } .r3 { height: 90px; }
.shape { text-align: center; color: #c82020; font: 10px/12px "DejaVu Sans Mono", monospace; }
.shape span { display: block; margin: 0 23px; border-bottom: 2px solid #000; }
.grid .shape.sel { background: #b4e8d4; border: 1px dotted #333; }
.ring svg { display: block; width: 100%; height: 80px; font: 10px "DejaVu Sans Mono", monospace; }

/* status bar */
.status { display: flex; gap: 3px; height: 16px; flex: none; overflow: hidden; padding: 1px 1px 0 4px; line-height: 22px; border-top: 1px solid #c8c5b8; }
.status span { height: 24px; padding-left: 2px; border: 1px solid #b8b5a6; }
.msg { flex: 1; }
.fps { width: 68px; font: 10px/20px "DejaVu Sans Mono", monospace; }

/* browser */
.browser { display: flex; flex-direction: column; min-width: 0; padding: 5px 0 0 3px; background: #fff; overflow: hidden; }
.marks { display: flex; align-items: center; gap: 16px; height: 30px; flex: none; margin-left: -3px; border: 1px solid #e8e8e8; border-width: 1px 0; overflow: hidden; }
.marks a { display: flex; align-items: center; gap: 2px; width: 65px; flex: none; color: #333; text-decoration: none; white-space: nowrap; }
.marks span { overflow: hidden; mask-image: linear-gradient(90deg, #000 60%, transparent); }
.marks a.cut { width: 34px; justify-content: flex-end; }
.marks a.plain { width: 57px; font: 10px/16px "DejaVu Sans Mono", monospace; }
.marks .plain span { mask-image: none; }
.cad { position: relative; flex: 1; min-height: 0; margin: 24px 0; background: #000; overflow: hidden; }
.mag { font: 15px "Liberation Sans", sans-serif; fill: #c030c8; }
.pink { font: 300 14px "Noto Sans CJK SC", sans-serif; fill: #f090d0; }
.ttl { font: 300 23px "Noto Sans CJK SC", sans-serif; fill: #fff; }
.tip { position: absolute; right: 7px; bottom: 28px; padding: 0 2px; background: #ffffe1; font: 10px/16px "DejaVu Sans Mono", monospace; }
.props { width: 280px; height: 30px; flex: none; overflow: hidden; background: #f4f4f4; border: 1px solid #d0d0d0; }
.props-head { display: flex; justify-content: flex-end; height: 11px; padding-right: 3px; background: #e6e6e6; border-bottom: 1px solid #d0d0d0; }
.props-head svg { width: 9px; height: 9px; opacity: .5; }
.props-tabs { display: flex; }
.props-tabs button { width: 65px; height: 22px; justify-content: center; color: #777; background: #dedede; border-right: 1px solid #c4c4c4; }
.props-tabs .sel { color: #111; background: #f4f4f4; font-weight: 500; }
```
